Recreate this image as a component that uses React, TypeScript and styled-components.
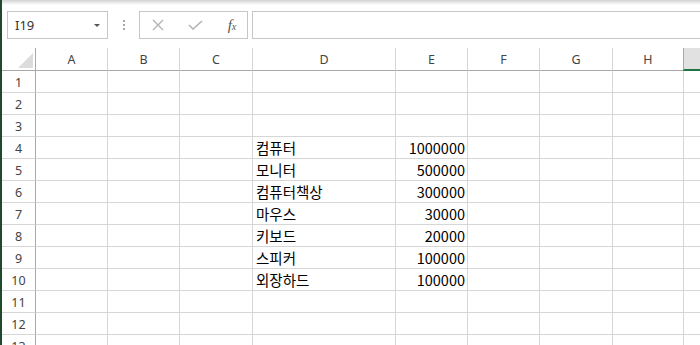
import React from 'react'
import styled, { createGlobalStyle } from 'styled-components'

const GlobalStyle = createGlobalStyle`
  html, body {
    margin: 0;
    padding: 0;
    background: #ffffff;
    overflow: hidden;
  }
`

const columns = ['A', 'B', 'C', 'D', 'E', 'F', 'G', 'H', 'I']
// row header first, then A..I
const widths = [34, 72, 72, 73, 143, 72, 72, 73, 71, 80]
const selectedColumn = 'I'

const items: Record<number, [string, string]> = {
  4: ['컴퓨터', '1000000'],
  5: ['모니터', '500000'],
  6: ['컴퓨터책상', '300000'],
  7: ['마우스', '30000'],
  8: ['키보드', '20000'],
  9: ['스피커', '100000'],
  10: ['외장하드', '100000'],
}

const Window = styled.div`
  width: 700px;
  height: 345px;
  box-sizing: border-box;
  border-left: 2px solid #1d4a2c;
  overflow: hidden;
  background: #ffffff;
`

const TopShade = styled.div`
  height: 5px;
  background: linear-gradient(#d2d2d2, #ffffff);
`

const FormulaBar = styled.div`
  display: flex;
  align-items: stretch;
  height: 28px;
  margin-top: 6px;
  padding-left: 5px;
`

const NameBox = styled.div`
  width: 101px;
  box-sizing: border-box;
  border: 1px solid #c6c6c6;
  display: flex;
  align-items: center;
  justify-content: space-between;
  padding: 0 7px 0 7px;
  font-family: 'Noto Sans', 'Open Sans', sans-serif;
  font-size: 13px;
  color: #333333;
`

const DropArrow = styled.span`
  width: 0;
  height: 0;
  border-left: 3px solid transparent;
  border-right: 3px solid transparent;
  border-top: 3px solid #555555;
  margin-top: 1px;
`

const Grip = styled.div`
  width: 31px;
  display: flex;
  flex-direction: column;
  align-items: center;
  justify-content: center;
  gap: 2px;
`

const GripDot = styled.span`
  width: 2px;
  height: 2px;
  background: #a8a8a8;
`

const ButtonGroup = styled.div`
  width: 109px;
  box-sizing: border-box;
  border: 1px solid #c6c6c6;
  display: flex;
  align-items: center;
  padding-left: 11px;
`

const BarButton = styled.span<{ $width: number }>`
  width: ${(p) => p.$width}px;
  display: flex;
  justify-content: center;
  align-items: center;
`

const Fx = styled.span`
  font-family: 'Liberation Serif', serif;
  font-style: italic;
  font-size: 15px;
  color: #555555;
  line-height: 1;
  & > small {
    font-size: 10px;
  }
`

const FormulaInput = styled.div`
  flex: 1;
  margin-left: 4px;
  border: 1px solid #c6c6c6;
  border-right: none;
`

const Sheet = styled.div`
  display: grid;
  grid-template-columns: ${widths.map((w) => `${w}px`).join(' ')};
  grid-template-rows: 23px;
  grid-auto-rows: 22px;
  margin-top: 9px;
`

const Corner = styled.div`
  position: relative;
  border-right: 1px solid #a9a9a9;
  border-bottom: 1px solid #a9a9a9;
  &::after {
    content: '';
    position: absolute;
    right: 2px;
    bottom: 2px;
    width: 0;
    height: 0;
    border-left: 15px solid transparent;
    border-bottom: 15px solid #dcdcdc;
  }
`

const ColHeader = styled.div<{ $selected?: boolean }>`
  display: flex;
  align-items: center;
  justify-content: center;
  font-family: 'Noto Sans', 'Open Sans', sans-serif;
  font-size: 12.5px;
  color: #444444;
  background: ${(p) => (p.$selected ? '#e1e1e1' : '#ffffff')};
  border-right: 1px solid ${(p) => (p.$selected ? '#e1e1e1' : '#d6d6d6')};
  border-left: ${(p) => (p.$selected ? '1px solid #a9a9a9' : 'none')};
  margin-left: ${(p) => (p.$selected ? '-1px' : '0')};
  border-bottom: ${(p) => (p.$selected ? '2px solid #217346' : '1px solid #a9a9a9')};
  padding-top: 1px;
`

const RowHeader = styled.div`
  display: flex;
  align-items: center;
  justify-content: center;
  font-family: 'Noto Sans', 'Open Sans', sans-serif;
  font-size: 12.5px;
  color: #444444;
  border-right: 1px solid #a9a9a9;
  border-bottom: 1px solid #d6d6d6;
  padding-top: 1px;
`

const Cell = styled.div<{ $align?: 'left' | 'right' }>`
  border-right: 1px solid #d6d6d6;
  border-bottom: 1px solid #d6d6d6;
  font-family: 'Noto Sans CJK KR', 'Noto Sans', sans-serif;
  font-size: 14.5px;
  line-height: 21px;
  color: #000000;
  text-align: ${(p) => p.$align ?? 'left'};
  padding: 0 2px 0 3px;
  white-space: nowrap;
`

const CancelIcon = () => (
  <svg width="12" height="12" viewBox="0 0 12 12">
    <path d="M1 1 L11 11 M11 1 L1 11" stroke="#b4b4b4" strokeWidth="1.4" fill="none" />
  </svg>
)

const EnterIcon = () => (
  <svg width="15" height="10" viewBox="0 0 15 10">
    <path d="M1 5 L5 9 L14 1" stroke="#b4b4b4" strokeWidth="1.6" fill="none" />
  </svg>
)

const rows = Array.from({ length: 13 }, (_, i) => i + 1)

const App = () => {
  return (
    <Window>
      <GlobalStyle />
      <TopShade />
      <FormulaBar>
        <NameBox>
          <span>I19</span>
          <DropArrow />
        </NameBox>
        <Grip>
          <GripDot />
          <GripDot />
          <GripDot />
        </Grip>
        <ButtonGroup>
          <BarButton $width={14}>
            <CancelIcon />
          </BarButton>
          <BarButton $width={23} />
          <BarButton $width={15}>
            <EnterIcon />
          </BarButton>
          <BarButton $width={22} />
          <BarButton $width={14}>
            <Fx>
              f<small>x</small>
            </Fx>
          </BarButton>
        </ButtonGroup>
        <FormulaInput />
      </FormulaBar>
      <Sheet>
        <Corner />
        {columns.map((c) => (
          <ColHeader key={c} $selected={c === selectedColumn}>
            {c === selectedColumn ? '' : c}
          </ColHeader>
        ))}
        {rows.map((r) => (
          <React.Fragment key={r}>
            <RowHeader>{r}</RowHeader>
            {columns.map((c) => {
              const item = items[r]
              if (item && c === 'D') return <Cell key={c}>{item[0]}</Cell>
              if (item && c === 'E')
                return (
                  <Cell key={c} $align="right">
                    {item[1]}
                  </Cell>
                )
              return <Cell key={c} />
            })}
          </React.Fragment>
        ))}
      </Sheet>
    </Window>
  )
}

export default App
